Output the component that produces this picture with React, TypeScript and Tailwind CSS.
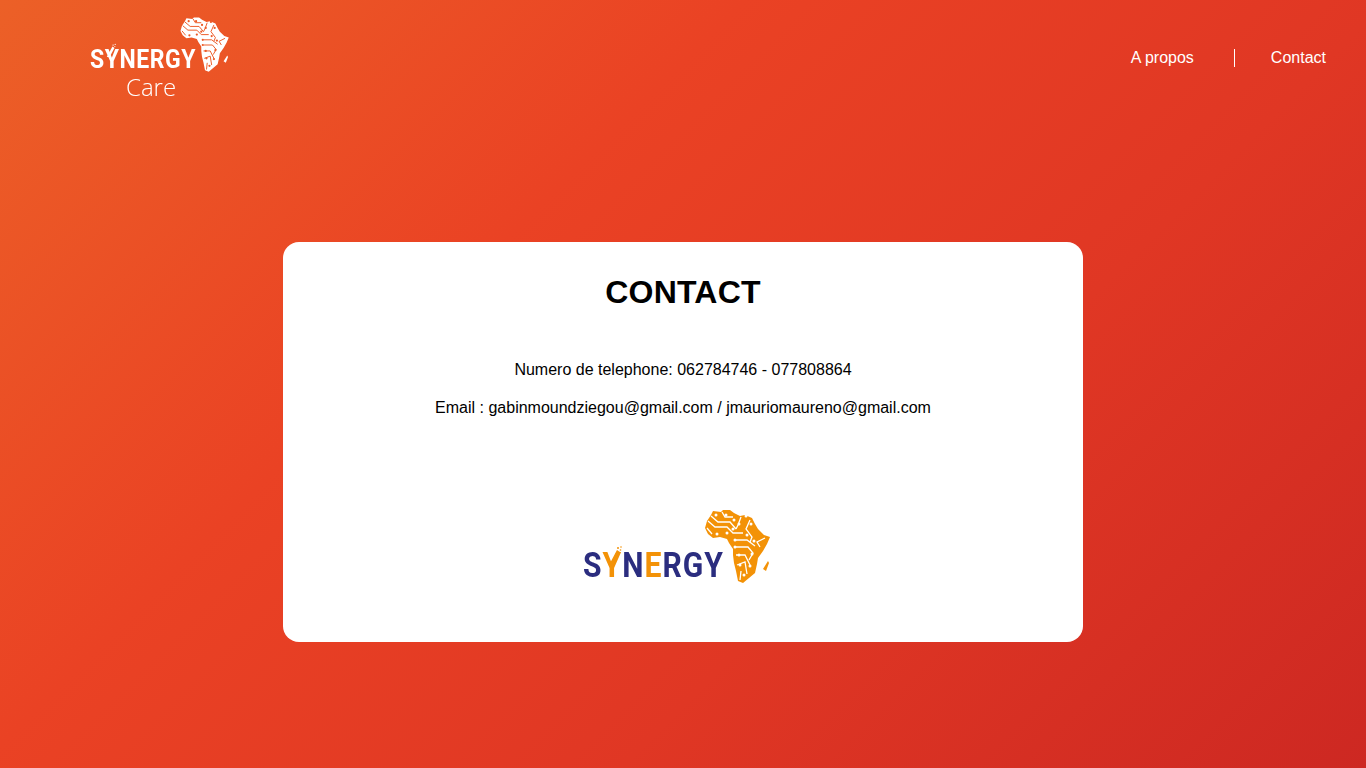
/**
 * Contact page: gradient background, header with logo + nav, centered card
 */

interface LogoPartProps {
  className: string;
  lineClass: string;
  dotClass: string;
}

// Africa map with circuit traces
function Africa({ className, lineClass, dotClass }: LogoPartProps) {
  const traces = [
    "M5 12 L12 18 L24 18 L30 24 L40 24",
    "M8 7 L15 13 L27 13 L33 20",
    "M4 19 L9 25",
    "M19 3 L22 8 L30 8",
    "M38 8 L35 16 L33 20",
    "M47 11 L43 20 L49 28 L47 33",
    "M33 31 L44 31 L52 37",
    "M33 38 L45 38 L50 44 L46 51",
    "M62 29 L54 33 L57 38",
    "M33 46 L42 46 L47 56",
    "M34 56 L42 53 L44 65",
    "M38 62 L37 71",
  ];
  const dots = [
    [13, 6], [23, 6], [31, 11], [36, 15], [43, 7], [48, 15], [24, 24], [30, 20],
    [14, 25], [32, 31], [44, 26], [32, 38], [51, 32], [36, 46], [49, 45], [37, 56],
    [47, 57], [41, 66],
  ];

  return (
    <svg viewBox="0 0 70 76" className={className}>
      <path
        d="M10 2 L18 3 L20 1 L27 1 L31 4 L37 7 L42 6 L49 9 L52 15 L55 20 L61 26 L67 28 L64 35 L60 42 L55 49 L54 55 L52 64 L46 69 L40 74 L35 72 L33 62 L31 54 L30 46 L30 40 L26 34 L24 30 L17 28 L10 29 L5 25 L2 19 L4 12 L8 6 Z"
        className="fill-current"
      />
      <path d="M65 52 L66 54 L63 62 L60 60 Z" className="fill-current" />
      {traces.map((d) => (
        <path key={d} d={d} fill="none" strokeWidth="1.3" className={lineClass} />
      ))}
      {dots.map(([cx, cy]) => (
        <circle key={`${cx}-${cy}`} cx={cx} cy={cy} r="1.5" className={dotClass} />
      ))}
    </svg>
  );
}

// Raised arm of the Y with its little spray of dots
function YFlourish({ className }: { className: string }) {
  return (
    <svg viewBox="0 0 14 20" className={className}>
      <path d="M1 20 L9 5 L12 7 L5 20 Z" className="fill-current" />
      <circle cx="10" cy="3" r="1" className="fill-current" />
      <circle cx="13" cy="2" r="0.8" className="fill-current" />
      <circle cx="12.5" cy="5" r="0.8" className="fill-current" />
    </svg>
  );
}

function HeaderLogo() {
  return (
    <div className="relative h-[84px] w-[142px] text-white blur-[0.3px]">
      <Africa
        className="absolute left-[89px] top-[-1px] h-[58px] w-[52px]"
        lineClass="stroke-[#ec5a26]"
        dotClass="fill-[#ec5a26]"
      />
      <div className="absolute left-0 top-[33px] origin-left scale-x-[0.92] font-['Roboto',sans-serif] text-[25px] leading-[20px] font-bold tracking-[0.6px]">
        SYNERGY
      </div>
      <YFlourish className="absolute left-[16px] top-[26px] h-[14px] w-[10px]" />
      <div className="absolute left-[36px] top-[56px] font-['Open_Sans',sans-serif] text-[24px] leading-[28px] font-light">
        Care
      </div>
    </div>
  );
}

function CardLogo() {
  return (
    <div className="relative -ml-[12px] h-[78px] w-[188px] blur-[0.3px]">
      <Africa
        className="absolute left-[120px] top-0 h-[76px] w-[70px] text-[#f39207]"
        lineClass="stroke-white"
        dotClass="fill-white"
      />
      <div className="absolute left-0 top-[37px] origin-left scale-x-[0.86] font-['Roboto',sans-serif] text-[35px] leading-[40px] font-bold tracking-[1.2px] text-[#2b2d7f]">
        S<span className="text-[#f39207]">Y</span>N<span className="text-[#f39207]">E</span>RGY
      </div>
      <YFlourish className="absolute left-[25px] top-[36px] h-[20px] w-[14px] text-[#f39207]" />
    </div>
  );
}

export default function App() {
  return (
    <div className="flex min-h-[768px] flex-col bg-[linear-gradient(135deg,#ec6027_0%,#ea4224_35%,#e03724_65%,#cd2822_100%)] font-['Liberation_Sans',Arial,sans-serif]">
      <header className="flex h-[116px] items-start justify-between pl-[90px] pr-10 pt-[17px]">
        <HeaderLogo />
        <nav className="mt-[29px] flex items-center text-base text-white">
          <a href="#apropos" className="pr-10">A propos</a>
          <span className="h-[18px] w-px bg-white" />
          <a href="#contact" className="pl-9">Contact</a>
        </nav>
      </header>

      <main className="flex flex-1 items-center justify-center">
        <section className="flex h-[400px] w-[800px] flex-col items-center rounded-2xl bg-white pt-[32px]">
          <h1 className="text-[32px] leading-[37px] font-bold tracking-[0.2px] text-black">CONTACT</h1>
          <p className="mt-[50px] text-base leading-[18px] text-black">
            Numero de telephone: 062784746 - 077808864
          </p>
          <p className="mt-5 text-base leading-[18px] text-black">
            Email : gabinmoundziegou@gmail.com / jmauriomaureno@gmail.com
          </p>
          <div className="mt-[92px]">
            <CardLogo />
          </div>
        </section>
      </main>
    </div>
  );
}
